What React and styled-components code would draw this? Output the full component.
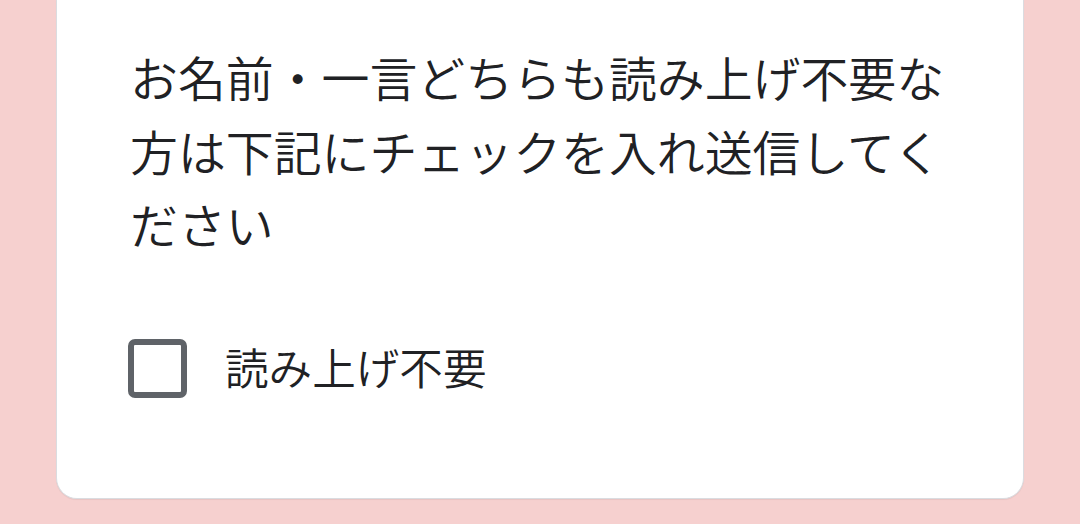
import React, { useState } from "react";
import styled, { createGlobalStyle } from "styled-components";

const GlobalStyle = createGlobalStyle`
  html, body {
    margin: 0;
    padding: 0;
    background: #f6d0cf;
  }
  body {
    font-family: "Noto Sans CJK JP", Roboto, "Noto Sans", sans-serif;
    color: #202124;
  }
`;

const Page = styled.div`
  width: 1080px;
  height: 524px;
  overflow: hidden;
  padding: 0 56px;
  box-sizing: border-box;
`;

const Card = styled.div`
  background: #fff;
  border: 1px solid #dadce0;
  border-top: none;
  border-radius: 0 0 21px 21px;
  padding: 40px 73px 100px;
  box-shadow: 0 1px 1px rgba(0, 0, 0, 0.06);
`;

const Question = styled.p`
  margin: 0;
  font-size: 47.9px;
  font-weight: 350;
  line-height: 73.5px;
  letter-spacing: 0;
`;

const Option = styled.label`
  display: flex;
  align-items: center;
  gap: 38px;
  margin-top: 78px;
  cursor: pointer;
  margin-left: -2px;
`;

const Box = styled.span`
  flex: none;
  width: 59px;
  height: 59px;
  box-sizing: border-box;
  border: 6px solid #5f6368;
  border-radius: 7px;
  background: ${(props) => (props.checked ? "#5f6368" : "#fff")};
`;

const Label = styled.span`
  font-size: 43.6px;
  font-weight: 350;
  line-height: 59px;
  margin-top: -3px;
`;

const App = () => {
  const [checked, setChecked] = useState(false);

  return (
    <>
      <GlobalStyle />
      <Page>
        <Card>
          <Question>
            お名前・一言どちらも読み上げ不要な方は下記にチェックを入れ送信してください
          </Question>
          <Option onClick={() => setChecked(!checked)}>
            <Box checked={checked} />
            <Label>読み上げ不要</Label>
          </Option>
        </Card>
      </Page>
    </>
  );
};

export default App;
